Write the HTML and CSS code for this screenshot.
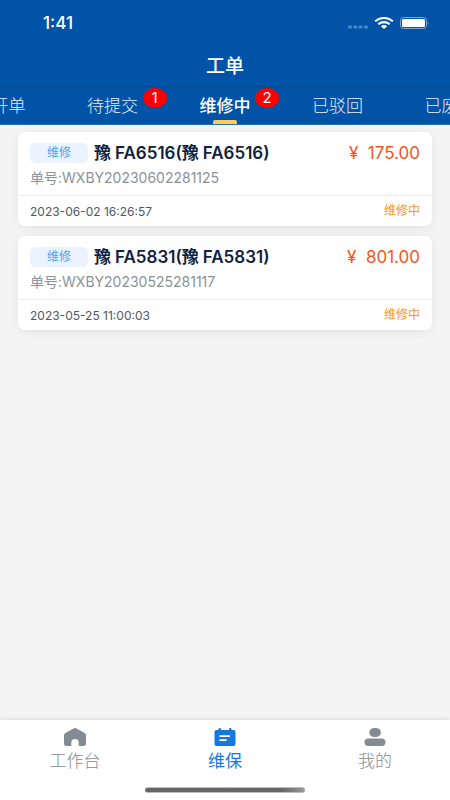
FILE: index.html
```html
<!DOCTYPE html>
<html lang="zh-CN">
<head>
<meta charset="utf-8">
<meta name="viewport" content="width=device-width, initial-scale=1">
<title>工单</title>
<link rel="stylesheet" href="styles.css">
</head>
<body>
<header class="header">
  <div class="status">
    <span class="clock">1:41</span>
    <div class="status-icons">
      <svg width="20" height="4" viewBox="0 0 20 4" fill="#4a86c4" aria-hidden="true"><rect width="4" height="3" y=".5" rx="1"/><rect x="5.300" width="4" height="3" y=".5" rx="1"/><rect x="10.600" width="4" height="3" y=".5" rx="1"/><rect x="16" width="4" height="3" y=".5" rx="1"/></svg>
      <svg class="wifi" width="20" height="12" viewBox="0 0 20 12" aria-hidden="true"><path d="M1.200 4.200C6.300-.2 13.700-.2 18.800 4.200M4.300 7.200C7.600 4.400 12.400 4.400 15.700 7.200" fill="none" stroke="#fff" stroke-width="2.100"/><path d="M6.800 9.200Q10 6.900 13.200 9.200L10 12z" fill="#fff"/></svg>
      <svg width="30" height="12" viewBox="0 0 30 12" aria-hidden="true"><rect x=".5" y=".5" width="26" height="11" rx="3" fill="none" stroke="#80a9d3"/><rect x="2" y="2" width="23" height="8" rx="1.500" fill="#fff"/><path d="M27.800 4Q29.500 6 27.800 8z" fill="#80a9d3"/></svg>
    </div>
  </div>
  <h1 class="title">工单</h1>
  <nav class="tabs" aria-label="工单状态">
    <button class="tab">待开单</button>
    <button class="tab">待提交<span class="badge">1</span></button>
    <button class="tab active">维修中<span class="badge">2</span></button>
    <button class="tab">已驳回</button>
    <button class="tab">已废弃</button>
  </nav>
</header>
<main class="list">
  <article class="card">
    <div class="card-main">
      <div class="card-head">
        <span class="tag">维修</span>
        <h2 class="plate">豫<span class="plate-no">FA6516(</span>豫<span class="plate-no">FA6516)</span></h2>
        <span class="price">¥&nbsp; 175.00</span>
      </div>
      <p class="order">单号:WXBY20230602281125</p>
    </div>
    <div class="card-foot"><time>2023-06-02 16:26:57</time><span class="state">维修中</span></div>
  </article>
  <article class="card">
    <div class="card-main">
      <div class="card-head">
        <span class="tag">维修</span>
        <h2 class="plate">豫<span class="plate-no">FA5831(</span>豫<span class="plate-no">FA5831)</span></h2>
        <span class="price">¥&nbsp; 801.00</span>
      </div>
      <p class="order">单号:WXBY20230525281117</p>
    </div>
    <div class="card-foot"><time>2023-05-25 11:00:03</time><span class="state">维修中</span></div>
  </article>
</main>
<footer class="footer">
  <nav class="bottom-nav" aria-label="主导航">
    <a class="nav-item" href="#"><svg width="22" height="18" viewBox="0 0 22 18" fill="currentColor" aria-hidden="true"><path d="M9.500.4Q11-.3 12.500.4L20.600 5Q22 5.800 22 7V15.500Q22 18 19.500 18H14.700V14.500Q14.700 11 11 11T7.300 14.500V18H2.500Q0 18 0 15.500V7Q0 5.800 1.400 5z"/></svg>工作台</a>
    <a class="nav-item current" href="#"><svg width="22" height="18" viewBox="0 0 22 18" aria-hidden="true"><path d="M2.500 2H4.500V1Q4.500 0 5.800 0T7 1V2H15V1Q15 0 16.200 0T17.500 1V2H19.500Q21.500 2 21.500 4V16Q21.500 18 19.500 18H2.500Q.5 18 .5 16V4Q.5 2 2.500 2z" fill="currentColor"/><path d="M5.500 8.200H16M5.500 12.200H12.500" stroke="#fff" stroke-width="1.800"/></svg>维保</a>
    <a class="nav-item" href="#"><svg width="22" height="18" viewBox="0 0 22 18" fill="currentColor" aria-hidden="true"><rect x="5.300" width="11.600" height="9" rx="5" ry="4.500"/><rect x=".5" y="10.500" width="21" height="7.500" rx="3.700"/></svg>我的</a>
  </nav>
  <div class="home-bar"></div>
</footer>
</body>
</html>
```
FILE: styles.css
```css
* { box-sizing: border-box; }

body {
  margin: 0;
  min-height: 100vh;
  display: flex;
  flex-direction: column;
  background: #f4f4f4;
  font-family: Inter, "Noto Sans CJK SC", sans-serif;
  overflow-x: hidden;
}

h1, h2, p { margin: 0; }

.header {
  background: #0053a6;
  color: #fff;
  overflow: hidden;
}

.status {
  height: 46px;
  padding: 0 20px 0 43px;
  display: flex;
  align-items: center;
  justify-content: space-between;
}

.clock { font-size: 17px; font-weight: 500; }

.status-icons { display: flex; align-items: center; gap: 6px; }
.status-icons svg:first-child { margin-top: 8px; }

.title {
  height: 40px;
  line-height: 42px;
  text-align: center;
  font-size: 19px;
  font-weight: 500;
}

.tabs {
  display: flex;
  margin: 0 -12.5%;
  border-top: 1px solid #004b91;
  border-bottom: 1px solid #2a6fb5;
}

.tab {
  flex: 1;
  position: relative;
  height: 37px;
  padding: 1px 0 0;
  border: 0;
  background: none;
  color: #e6eef6;
  font: inherit;
  font-size: 17px;
  font-weight: 300;
  line-height: 36px;
}

.tab.active { color: #fff; font-weight: 500; }

.tab.active::after {
  content: "";
  position: absolute;
  bottom: 0;
  left: 50%;
  width: 24px;
  height: 4px;
  margin-left: -12px;
  border-radius: 2px 2px 0 0;
  background: #ffcd57;
}

.badge {
  position: absolute;
  top: 1px;
  left: 50%;
  width: 24px;
  height: 20px;
  margin-left: 30px;
  border-radius: 50%;
  background: #f00;
  color: #fff;
  font-size: 15px;
  font-weight: 400;
  line-height: 20px;
  text-align: center;
}

.list {
  flex: 1;
  padding: 7px 18px;
  display: flex;
  flex-direction: column;
  gap: 10px;
}

.card {
  border-radius: 7px;
  background: #fff;
  box-shadow: 0 2px 10px rgba(0, 0, 0, 0.07);
}

.card-main { padding: 9px 12px 5px; }

.card-head { display: flex; align-items: center; height: 24px; }

.tag {
  width: 58px;
  height: 20px;
  margin-right: 6px;
  border-radius: 5px;
  background: #eaf3ff;
  color: #4ba3f5;
  font-size: 12px;
  line-height: 20px;
  text-align: center;
}

.plate {
  color: #101f40;
  font-size: 17px;
  font-weight: 600;
  line-height: 24px;
  white-space: nowrap;
}

.plate-no { margin-left: 4px; }

.price {
  margin-left: auto;
  color: #fa541c;
  font-size: 17px;
  line-height: 24px;
  white-space: nowrap;
}

.order {
  color: #8a9299;
  font-size: 14px;
  line-height: 25px;
}

.card-foot {
  display: flex;
  align-items: center;
  justify-content: space-between;
  height: 31px;
  padding: 0 12px;
  border-top: 1px solid #eee;
  color: #4e5865;
  font-size: 12px;
}

.state { color: #fa9614; line-height: 18px; }

.footer {
  background: #fff;
  box-shadow: 0 -1px 4px rgba(0, 0, 0, 0.1);
  padding-bottom: 7px;
}

.bottom-nav { display: flex; padding-top: 8px; height: 67px; }

.nav-item {
  flex: 1;
  display: flex;
  flex-direction: column;
  align-items: center;
  gap: 3px;
  color: #838c94;
  font-size: 17px;
  font-weight: 300;
  line-height: 24px;
  text-decoration: none;
}

.nav-item.current { color: #1677dc; font-weight: 400; }

.home-bar {
  width: 160px;
  height: 6px;
  margin: 0 auto;
  border-radius: 3px;
  border: solid #bbb;
  border-width: 1px 0;
  background: linear-gradient(90deg, #666 85%, #999);
}
```
